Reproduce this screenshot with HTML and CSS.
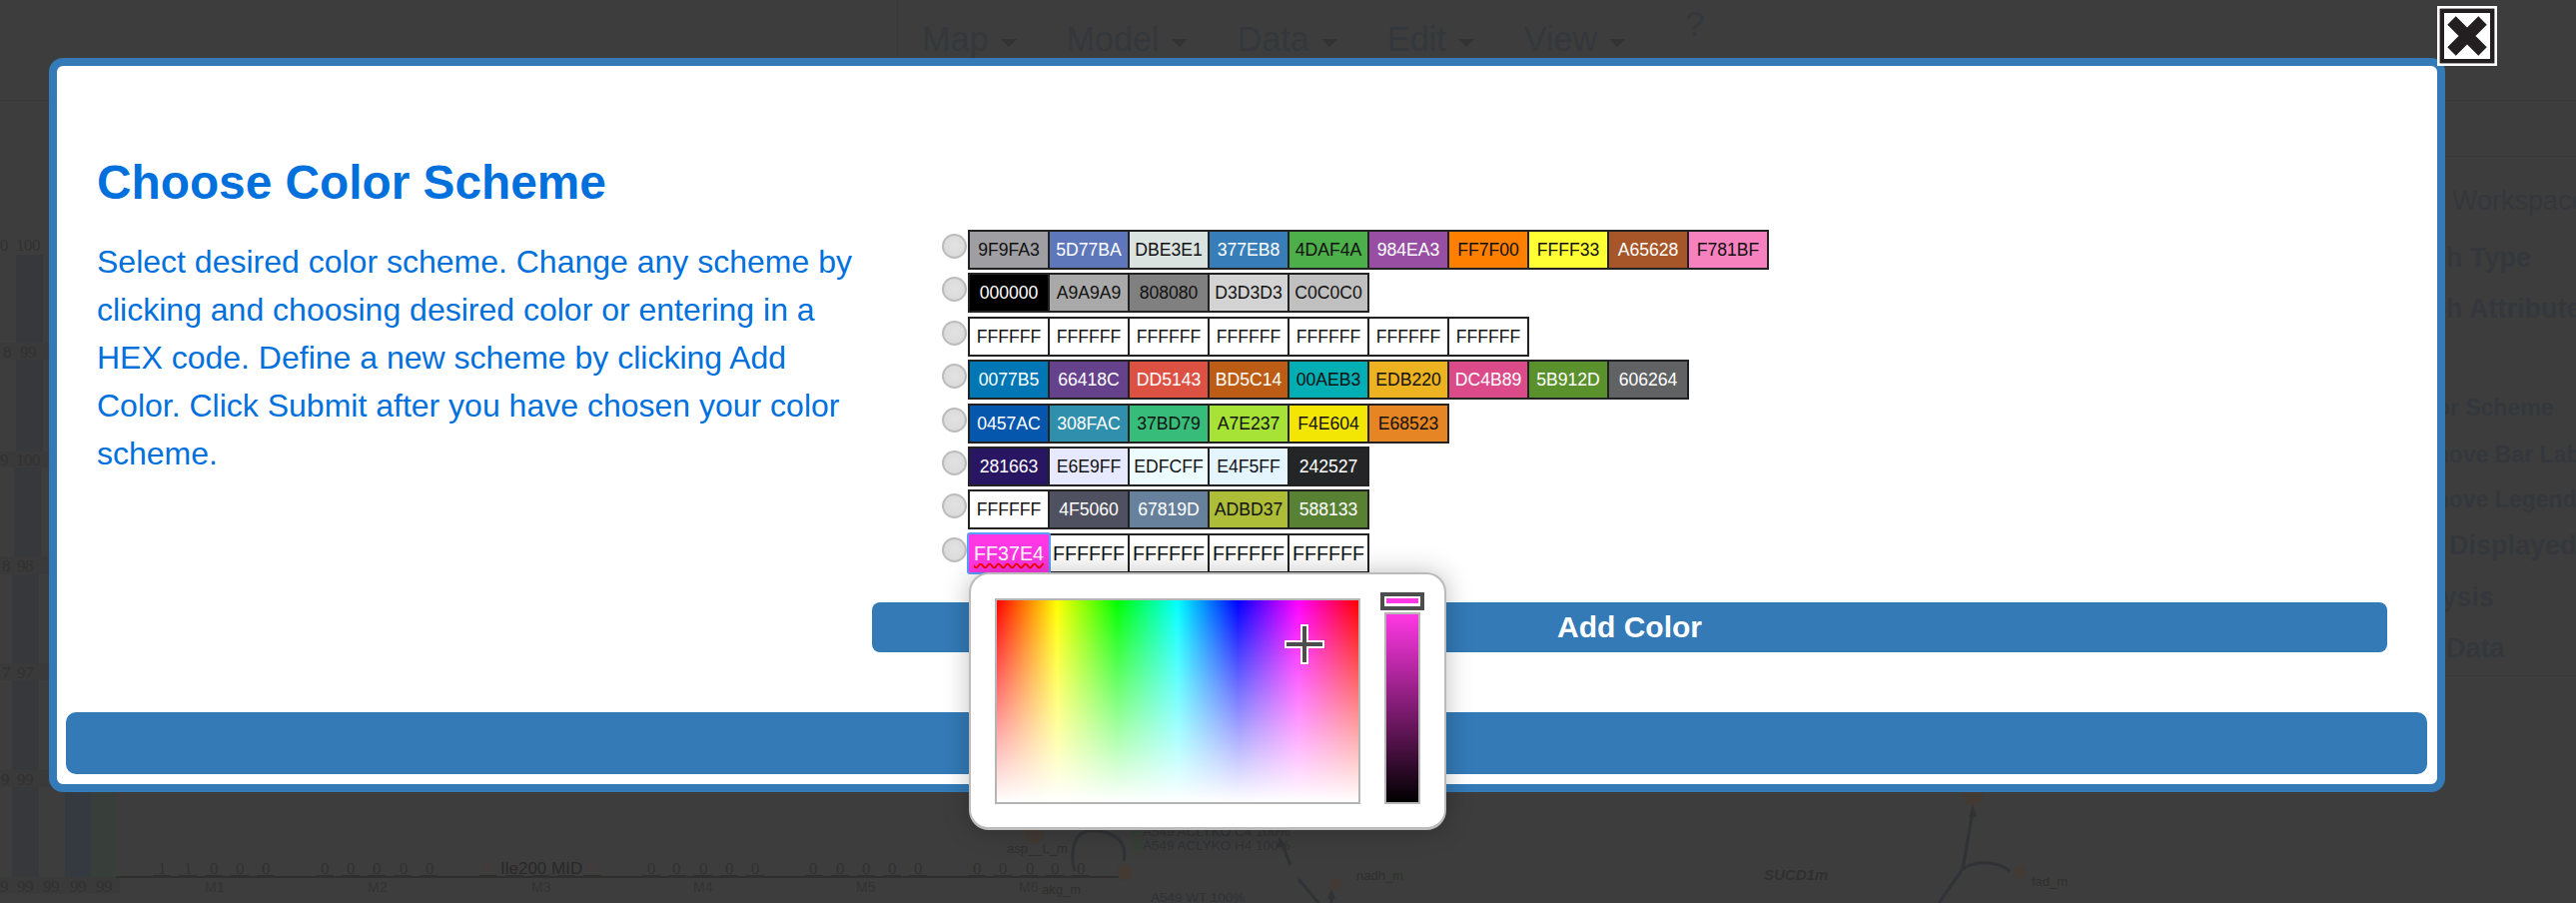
FILE: index.html
```html
<!DOCTYPE html>
<html lang="en">
<head>
    <meta charset="UTF-8">
    <meta name="viewport" content="width=device-width, initial-scale=1.0">
    <title>Choose Color Scheme</title>
    <link rel="stylesheet" href="styles.css">
</head>
<body>
    <!-- dimmed page behind the modal -->
    <div class="page">
        <nav class="menu">
            <div class="menu-list">
                <span class="menu-item">Map</span>
                <span class="menu-item">Model</span>
                <span class="menu-item">Data</span>
                <span class="menu-item">Edit</span>
                <span class="menu-item">View</span>
                <span class="help">?</span>
            </div>
        </nav>
        <div class="workspace">
            <svg class="chart" viewBox="0 101 2386 803" width="2386" height="803">
                <g class="bands">
                    <rect x="0" y="343" width="60" height="17"/>
                    <rect x="0" y="452" width="60" height="16"/>
                    <rect x="0" y="557" width="60" height="18"/>
                    <rect x="0" y="664" width="60" height="17"/>
                    <rect x="0" y="771" width="60" height="17"/>
                    <rect x="0" y="878" width="120" height="17"/>
                </g>
                <g class="bars">
                    <rect x="16" y="255" width="27" height="88"/>
                    <rect x="16" y="360" width="27" height="92"/>
                    <rect x="14" y="468" width="27" height="89"/>
                    <rect x="12" y="575" width="27" height="89"/>
                    <rect x="12" y="681" width="27" height="90"/>
                    <rect x="12" y="788" width="27" height="90"/>
                    <rect x="65" y="790" width="26" height="88" class="bar-blue"/>
                    <rect x="91" y="790" width="25" height="88" class="bar-green"/>
                </g>
                <g class="digits">
                    <text x="0 16 24 32" y="251">0100</text>
                    <text x="3 20 28" y="358">899</text>
                    <text x="0 16 24 32" y="466">9100</text>
                    <text x="2 17 25" y="572">898</text>
                    <text x="2 17 25" y="679">797</text>
                    <text x="1 17 25" y="786">999</text>
                    <text x="0 17 25 43 51 70 78 96 104" y="893">999999999</text>
                    <text x="158 184 210 236 262" y="875">11000</text>
                    <text x="321 347 373 400 426" y="875">00000</text>
                    <text x="485 511 562 589" y="875" class="red">0000</text>
                    <text x="648 673 700 726 752" y="875">00000</text>
                    <text x="810 837 863 889 915" y="875">00000</text>
                    <text x="974 1000 1027 1052 1078" y="875">00000</text>
                </g>
                <g class="axis">
                    <path d="M116 878H1126"/>
                    <path id="ticks" d="M153 877h18M179 877h18M205 877h18M231 877h18M257 877h18"/>
                    <use href="#ticks" x="163"/>
                    <use href="#ticks" x="327"/>
                    <use href="#ticks" x="490"/>
                    <use href="#ticks" x="653"/>
                    <use href="#ticks" x="816"/>
                </g>
                <g class="labels">
                    <text x="205" y="893">M1</text>
                    <text x="368" y="893">M2</text>
                    <text x="532" y="893">M3</text>
                    <text x="694" y="893">M4</text>
                    <text x="857" y="893">M5</text>
                    <text x="1020" y="893">M6</text>
                    <text x="501" y="875" class="bold">Ile200 MID</text>
                </g>
                <g class="map">
                    <circle cx="1035" cy="835" r="10"/>
                    <circle cx="1126" cy="873" r="8"/>
                    <circle cx="1277" cy="826" r="9"/>
                    <circle cx="1338" cy="885" r="6"/>
                    <circle cx="1975" cy="797" r="10"/>
                    <circle cx="2022" cy="873" r="6"/>
                    <path class="edge" d="M1125 862C1130 840 1110 830 1090 832C1072 834 1072 860 1076 872"/>
                    <path class="edge" d="M1300 880L1320 904M1333 904V895M1283 843L1292 866"/>
                    <path class="edge" d="M1975 812L1965 870L1941 904M1963 872C1975 860 2000 862 2012 872"/>
                    <path class="arrow" d="M1975 806l-4 12h8zM1333 890l-4 10h8zM1281 838l-3 11l8 -2z"/>
                    <rect x="1133" y="828" width="10" height="10" class="legend-key"/>
                    <rect x="1133" y="841" width="10" height="10" class="legend-key"/>
                    <text x="1144" y="837" class="map-legend">A549 ACLYKO C4 100%</text>
                    <text x="1144" y="851" class="map-legend">A549 ACLYKO H4 100%</text>
                    <text x="1152" y="903" class="map-legend">A549 WT 100%</text>
                    <text x="1008" y="854" class="map-small">asp__L_m</text>
                    <text x="1043" y="895" class="map-small">akg_m</text>
                    <text x="1358" y="881" class="map-small">nadh_m</text>
                    <text x="2034" y="887" class="map-small">fad_m</text>
                    <text x="1766" y="881" class="map-rxn">SUCD1m</text>
                </g>
            </svg>
            <ul class="sidebar">
                <li class="side-link">Save Workspace</li>
                <li class="side-head">Graph Type</li>
                <li class="side-head">Graph Attributes</li>
                <li class="side-sub">Color Scheme</li>
                <li class="side-sub">Remove Bar Labels</li>
                <li class="side-sub">Remove Legend</li>
                <li class="side-head">Data Displayed</li>
                <li class="side-head">Analysis</li>
                <li class="side-head">Raw Data</li>
            </ul>
        </div>
    </div>

    <div class="modal">
        <button class="close" aria-label="Close">
            <svg viewBox="0 0 60 60" width="60" height="60">
                <rect x="4.8" y="4.8" width="50.4" height="50.4" fill="#fff" stroke="#231f20" stroke-width="4.4"/>
                <path d="M14.5 14.5L45.5 45.5M45.5 14.5L14.5 45.5" stroke="#231f20" stroke-width="12"/>
            </svg>
        </button>
        <div class="modal-body">
            <div class="intro">
                <h1>Choose Color Scheme</h1>
                <p>Select desired color scheme. Change any scheme by clicking and choosing desired color or entering in a HEX code. Define a new scheme by clicking Add Color. Click Submit after you have chosen your color scheme.</p>
            </div>
            <div class="schemes">
                <div class="scheme">
                    <span class="radio"></span>
                    <span class="swatch" style="background:#9F9FA3">9F9FA3</span>
                    <span class="swatch light" style="background:#5D77BA">5D77BA</span>
                    <span class="swatch" style="background:#DBE3E1">DBE3E1</span>
                    <span class="swatch light" style="background:#377EB8">377EB8</span>
                    <span class="swatch" style="background:#4DAF4A">4DAF4A</span>
                    <span class="swatch light" style="background:#984EA3">984EA3</span>
                    <span class="swatch" style="background:#FF7F00">FF7F00</span>
                    <span class="swatch" style="background:#FFFF33">FFFF33</span>
                    <span class="swatch light" style="background:#A65628">A65628</span>
                    <span class="swatch" style="background:#F781BF">F781BF</span>
                </div>
                <div class="scheme">
                    <span class="radio"></span>
                    <span class="swatch light" style="background:#000000">000000</span>
                    <span class="swatch" style="background:#A9A9A9">A9A9A9</span>
                    <span class="swatch" style="background:#808080">808080</span>
                    <span class="swatch" style="background:#D3D3D3">D3D3D3</span>
                    <span class="swatch" style="background:#C0C0C0">C0C0C0</span>
                </div>
                <div class="scheme">
                    <span class="radio"></span>
                    <span class="swatch">FFFFFF</span>
                    <span class="swatch">FFFFFF</span>
                    <span class="swatch">FFFFFF</span>
                    <span class="swatch">FFFFFF</span>
                    <span class="swatch">FFFFFF</span>
                    <span class="swatch">FFFFFF</span>
                    <span class="swatch">FFFFFF</span>
                </div>
                <div class="scheme">
                    <span class="radio"></span>
                    <span class="swatch light" style="background:#0077B5">0077B5</span>
                    <span class="swatch light" style="background:#66418C">66418C</span>
                    <span class="swatch light" style="background:#DD5143">DD5143</span>
                    <span class="swatch light" style="background:#BD5C14">BD5C14</span>
                    <span class="swatch" style="background:#00AEB3">00AEB3</span>
                    <span class="swatch" style="background:#EDB220">EDB220</span>
                    <span class="swatch light" style="background:#DC4B89">DC4B89</span>
                    <span class="swatch light" style="background:#5B912D">5B912D</span>
                    <span class="swatch light" style="background:#606264">606264</span>
                </div>
                <div class="scheme">
                    <span class="radio"></span>
                    <span class="swatch light" style="background:#0457AC">0457AC</span>
                    <span class="swatch light" style="background:#308FAC">308FAC</span>
                    <span class="swatch" style="background:#37BD79">37BD79</span>
                    <span class="swatch" style="background:#A7E237">A7E237</span>
                    <span class="swatch" style="background:#F4E604">F4E604</span>
                    <span class="swatch" style="background:#E68523">E68523</span>
                </div>
                <div class="scheme">
                    <span class="radio"></span>
                    <span class="swatch light" style="background:#281663">281663</span>
                    <span class="swatch" style="background:#E6E9FF">E6E9FF</span>
                    <span class="swatch" style="background:#EDFCFF">EDFCFF</span>
                    <span class="swatch" style="background:#E4F5FF">E4F5FF</span>
                    <span class="swatch light" style="background:#242527">242527</span>
                </div>
                <div class="scheme">
                    <span class="radio"></span>
                    <span class="swatch">FFFFFF</span>
                    <span class="swatch light" style="background:#4F5060">4F5060</span>
                    <span class="swatch light" style="background:#67819D">67819D</span>
                    <span class="swatch" style="background:#ADBD37">ADBD37</span>
                    <span class="swatch light" style="background:#588133">588133</span>
                </div>
                <div class="scheme scheme-new">
                    <span class="radio"></span>
                    <span class="swatch light focused" style="background:#FF37E4"><span class="misspelled">FF37E4</span></span>
                    <span class="swatch">FFFFFF</span>
                    <span class="swatch">FFFFFF</span>
                    <span class="swatch">FFFFFF</span>
                    <span class="swatch">FFFFFF</span>

                    <div class="picker">
                        <div class="picker-field">
                            <span class="picker-cross"></span>
                        </div>
                        <div class="picker-slider" style="--hue:#FF37E4">
                            <span class="picker-thumb"></span>
                        </div>
                    </div>
                </div>
                <button class="btn add-color">Add Color</button>
            </div>
        </div>
        <button class="btn submit">Submit</button>
    </div>
</body>
</html>
```

FILE: styles.css
```css
* {
    box-sizing: border-box;
}
body {
    margin: 0;
    width: 2579px;
    height: 904px;
    overflow: hidden;
    position: relative;
    background: #3d3d3d;
    font-family: "Liberation Sans", Arial, sans-serif;
}

/* dimmed page */
.page {
    height: 904px;
    color: #34383c;
}
.menu {
    height: 101px;
    border-bottom: 1px solid #393939;
}
.menu-list {
    display: flex;
    height: 100%;
    margin-left: 898px;
    padding: 17px 0 0 24px;
    border-left: 1px solid #393939;
    font-size: 34.2px;
    line-height: 44px;
}
.menu-item {
    display: flex;
    align-items: center;
    height: 44px;
    margin-right: 50px;
}
.menu-item::after {
    content: "";
    margin: 8px 0 0 12px;
    border-top: 8px solid #333;
    border-left: 8px solid transparent;
    border-right: 8px solid transparent;
}
.help {
    margin: -15px 0 0 10px;
}
.workspace {
    display: grid;
    grid-template-columns: 2386px 1fr;
}
.chart {
    display: block;
}
.bands rect {
    fill: #3a3a3a;
}
.bars rect {
    fill: #36383c;
}
.bars .bar-blue {
    fill: #343a40;
}
.bars .bar-green {
    fill: #383f3a;
}
.digits text {
    font-family: "Liberation Serif", serif;
    font-size: 17px;
    fill: #313131;
}
.digits .red {
    fill: #463b38;
}
.axis path {
    fill: none;
    stroke: #2f2f2f;
    stroke-width: 2;
}
.labels text {
    font-size: 14px;
    fill: #333;
}
.labels .bold {
    font-size: 17px;
    fill: #292929;
}
.map circle {
    fill: #423a33;
}
.map .edge {
    fill: none;
    stroke: #303235;
    stroke-width: 3;
}
.map .arrow {
    fill: #303235;
}
.map .legend-key {
    fill: #354036;
}
.map-legend {
    font-size: 13.5px;
    fill: #303234;
}
.map-small {
    font-size: 13px;
    fill: #2f2f2f;
}
.map-rxn {
    font-size: 15px;
    font-weight: bold;
    font-style: italic;
    fill: #303030;
}
.sidebar {
    display: grid;
    grid-template-rows: 40px 57px 51px 99px 47px 45px 46px 52px 51px;
    align-items: end;
    align-content: start;
    height: 521px;
    margin: 55px 0 0;
    padding: 24px 0 0;
    border-top: 1px solid #393939;
    border-bottom: 1px solid #393939;
    list-style: none;
    white-space: nowrap;
    line-height: 40px;
    font-size: 27px;
    font-weight: bold;
}
.sidebar .side-link {
    font-weight: normal;
}
.sidebar .side-sub {
    padding-left: 16px;
    font-size: 23px;
}

/* modal */
.modal {
    position: absolute;
    left: 49px;
    top: 58px;
    width: 2399px;
    height: 735px;
    background: #fff;
    border: 8px solid #337ab7;
    border-radius: 14px;
}
.close {
    position: absolute;
    right: -60px;
    top: -60px;
    width: 60px;
    height: 60px;
    padding: 0;
    border: none;
    background: #fff;
}
.close svg {
    display: block;
}
.modal-body {
    display: grid;
    grid-template-columns: 776px 1fr;
    padding: 0 50px 0 40px;
}
.intro {
    padding-top: 87px;
}
h1 {
    margin: 0 0 25px;
    font-size: 47.8px;
    line-height: 60px;
    font-weight: bold;
    color: #0070dd;
}
.intro p {
    width: 770px;
    margin: 0;
    font-size: 32px;
    line-height: 48px;
    color: #0070dd;
}
.schemes {
    padding: 164px 0 0;
}
.scheme {
    display: flex;
    align-items: flex-start;
    height: 40px;
    margin: 0 0 3.4px 70px;
}
.radio {
    width: 25px;
    height: 25px;
    margin: 4px 1px 0 0;
    border: 2px solid #bcbcbc;
    border-radius: 50%;
    background: radial-gradient(circle at 50% 45%, #e2e2e2, #d8d8d8);
}
.swatch {
    width: 82px;
    height: 40px;
    margin-right: -2px;
    border: 2px solid #222;
    background: #fff;
    color: #111;
    font-size: 17.6px;
    line-height: 36px;
    text-align: center;
}
.swatch.light {
    color: #fff;
}
.scheme-new {
    position: relative;
    margin-bottom: 0;
}
.scheme-new .swatch {
    font-size: 19.7px;
}
.swatch.focused {
    position: relative;
    z-index: 1;
    border-color: #ff37e4;
    outline: 2px solid #5b9dfc;
    outline-offset: -1px;
    border-radius: 2px;
}
.misspelled {
    text-decoration: underline wavy #f00;
    text-underline-offset: 2px;
}
.btn {
    display: block;
    border: none;
    background: #337ab7;
    color: #fff;
    font-family: inherit;
    font-weight: bold;
    font-size: 30px;
}
.add-color {
    width: 100%;
    height: 50px;
    margin-top: 29px;
    border-radius: 8px;
}
.submit {
    width: 2364px;
    height: 62px;
    margin: 60px 0 0 9px;
    border-radius: 10px;
}

/* colour picker popup */
.picker {
    position: absolute;
    left: 27px;
    top: 39px;
    z-index: 2;
    display: flex;
    align-items: flex-start;
    gap: 24px;
    width: 478px;
    height: 258px;
    padding: 24px;
    background: #fff;
    border: 2px solid #bbb;
    border-bottom-width: 3px;
    border-radius: 20px;
    box-shadow: 0 0 26px rgba(0, 0, 0, 0.25);
}
.picker-field {
    position: relative;
    width: 366px;
    height: 206px;
    border: 2px solid #b5b5b5;
    background: linear-gradient(to bottom, rgba(255, 255, 255, 0), #fff),
        linear-gradient(to right, #f00, #ff0, #0f0, #0ff, #00f, #f0f, #f00);
}
.picker-cross {
    position: absolute;
    left: 288px;
    top: 24px;
    width: 40px;
    height: 40px;
    background:
        linear-gradient(#4d4d4d, #4d4d4d) center / 36px 4px no-repeat,
        linear-gradient(#4d4d4d, #4d4d4d) center / 4px 36px no-repeat,
        linear-gradient(#fff, #fff) center / 40px 8px no-repeat,
        linear-gradient(#fff, #fff) center / 8px 40px no-repeat;
}
.picker-slider {
    position: relative;
    width: 36px;
    height: 192px;
    margin-top: 14px;
    border: 2px solid #b5b5b5;
    background: linear-gradient(to bottom, var(--hue), #000);
}
.picker-thumb {
    position: absolute;
    left: -6px;
    top: -22px;
    width: 44px;
    height: 18px;
    border: 4px solid #4d4d4d;
    background: linear-gradient(var(--hue), var(--hue)) center / 32px 5px no-repeat, #fff;
}
```
